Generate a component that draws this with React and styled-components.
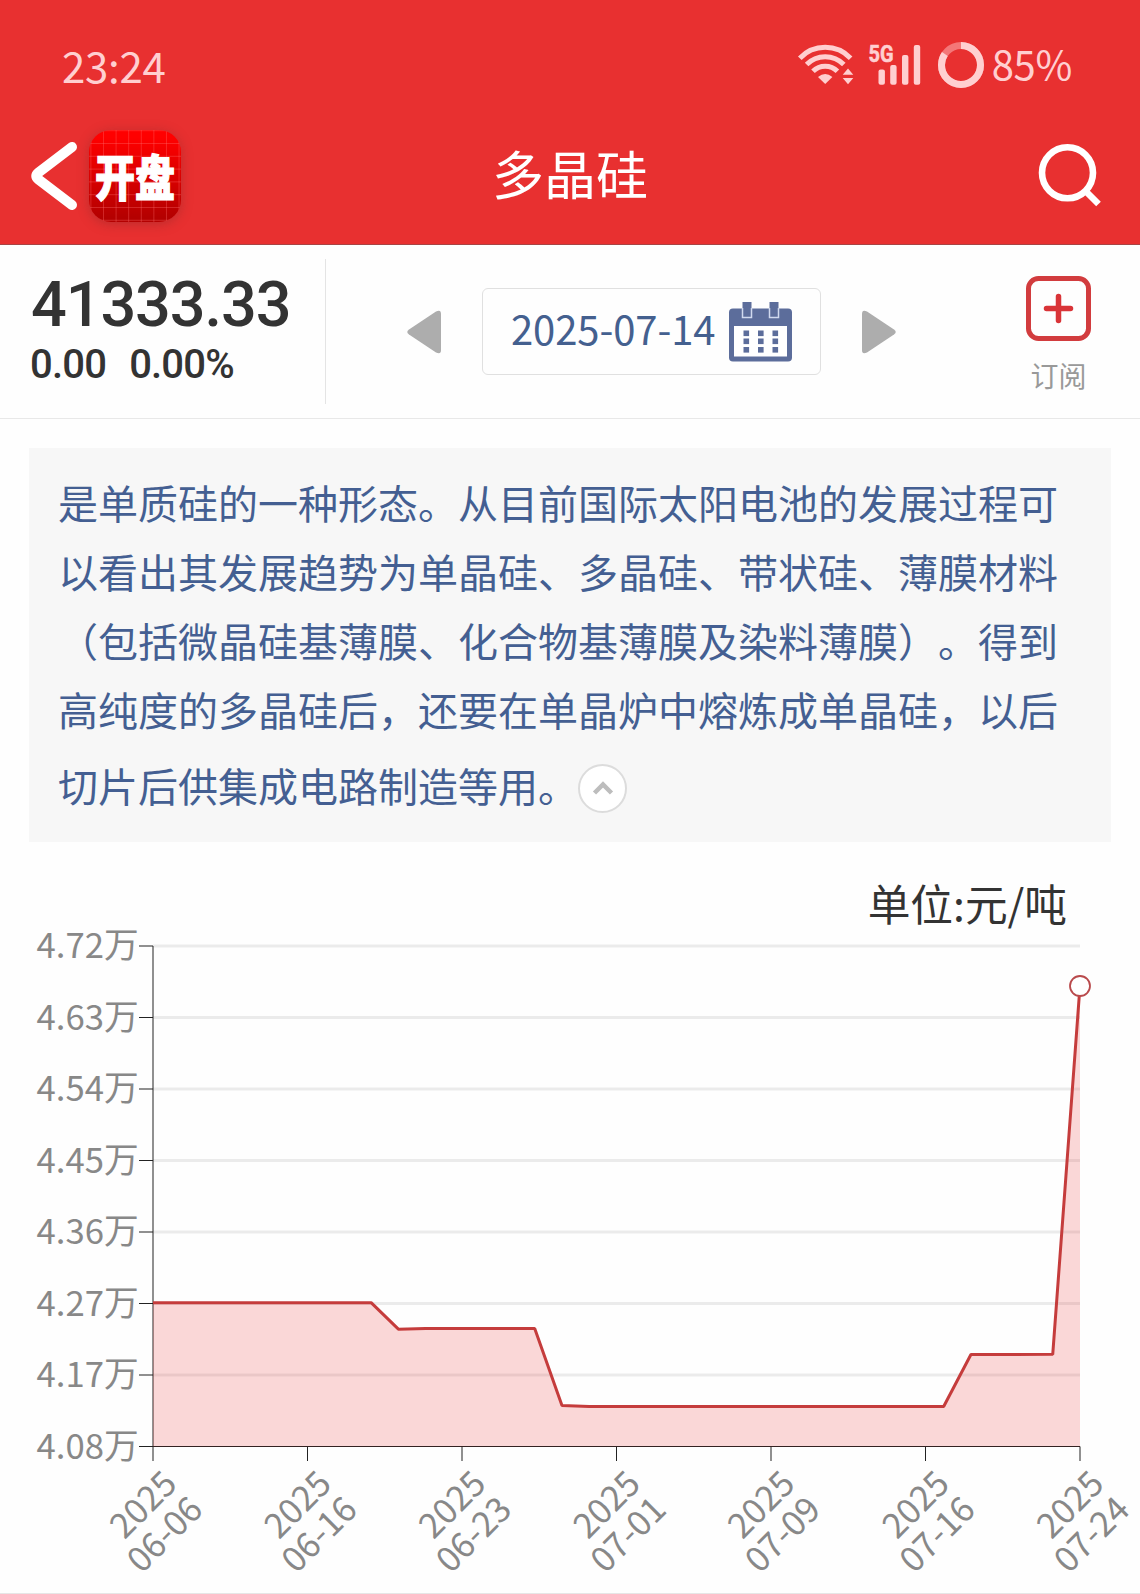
import styled, { createGlobalStyle } from 'styled-components';

const cjk = "'Noto Sans CJK SC', 'Noto Sans', sans-serif";

// 全局样式
const GlobalStyle = createGlobalStyle`
  * {
    box-sizing: border-box;
  }
  body {
    margin: 0;
    background: #fefefe;
    font-family: ${cjk};
  }
  svg {
    display: block;
    flex: none;
    overflow: visible;
  }
`;

const Page = styled.div`
  width: 1140px;
  height: 1594px;
  overflow: hidden;
  display: flex;
  flex-direction: column;
  border-bottom: 1px solid #e6e6e6;
`;

// 顶部红色区域
const Header = styled.header`
  height: 245px;
  background: #e83030;
  border-bottom: 1px solid #a84444;
`;

const StatusBar = styled.div`
  height: 130px;
  padding: 0 68px 0 62px;
  display: flex;
  align-items: center;
  justify-content: space-between;
  color: #ffcfd0;
`;

const StatusText = styled.span`
  font-size: ${(props) => props.size}px;
  line-height: 44px;
  letter-spacing: -0.3px;
  padding-bottom: ${(props) => props.lift}px;
`;

const StatusIcons = styled.div`
  display: flex;
  align-items: center;
`;

const Gap = styled.i`
  width: ${(props) => props.w}px;
`;

const NavBar = styled.div`
  height: 115px;
  padding: 0 38px 23px 30px;
  display: grid;
  grid-template-columns: 1fr auto 1fr;
  align-items: center;
`;

const NavSide = styled.div`
  display: flex;
  align-items: center;
  gap: 11px;
  justify-content: ${(props) => (props.end ? 'flex-end' : 'flex-start')};
`;

const Title = styled.h1`
  margin: 0;
  padding: 0 0 6px 8px;
  color: #fff;
  font-size: 52px;
  font-weight: 400;
  line-height: 86px;
`;

const Logo = styled.div`
  width: 92px;
  height: 92px;
  padding-bottom: 3px;
  border-radius: 22px;
  display: flex;
  align-items: center;
  justify-content: center;
  background:
    linear-gradient(90deg, rgba(255, 110, 110, 0.35) 1px, transparent 1px) 14px 0 / 12.6px 100%,
    linear-gradient(rgba(255, 110, 110, 0.35) 1px, transparent 1px) 0 13px / 100% 12.8px,
    linear-gradient(#ff0000 8%, #b40000 95%);
  box-shadow: 0 2px 12px rgba(120, 40, 40, 0.4);
`;

const LogoText = styled.span`
  color: #fff;
  font-size: 40px;
  font-weight: 900;
  line-height: 40px;
  -webkit-text-stroke: 1px #fff;
  transform: scaleY(1.23);
`;

// 行情栏
const QuoteBar = styled.section`
  height: 174px;
  display: flex;
  align-items: center;
  border-bottom: 1px solid #e8e8e8;
`;

const Quote = styled.div`
  width: 326px;
  height: 145px;
  padding: 14px 0 0 30px;
  border-right: 1px solid #e4e4e4;
  color: #333;
  font-family: Roboto, sans-serif;
  font-weight: 500;
`;

const Price = styled.div`
  padding-left: 1px;
  font-size: 63px;
  line-height: 64px;
  letter-spacing: -1.1px;
  white-space: nowrap;
`;

const Change = styled.div`
  display: flex;
  gap: 23px;
  font-size: 40px;
  line-height: 48px;
  letter-spacing: -0.8px;
  margin-top: 4px;
`;

const DatePicker = styled.div`
  flex: 1;
  display: flex;
  align-items: center;
  justify-content: center;
  gap: 41px;
`;

const DateBox = styled.div`
  width: 339px;
  height: 87px;
  padding: 0 28px;
  display: flex;
  align-items: center;
  justify-content: space-between;
  border: 1px solid #e0e0e0;
  border-radius: 6px;
  color: #44608f;
  font-size: 40px;
  line-height: 50px;
`;

const DateText = styled.span`
  padding-bottom: 7px;
  letter-spacing: -0.1px;
`;

const Subscribe = styled.div`
  width: 163px;
  padding-top: 9px;
  display: flex;
  flex-direction: column;
  align-items: center;
  gap: 13px;
  color: #999;
  font-size: 28px;
  line-height: 42px;
`;

// 简介
const Intro = styled.p`
  width: 1082px;
  height: 394px;
  margin: 29px 0 0 29px;
  padding: 20px 51px 0 29px;
  background: #f7f7f7;
  color: #445f92;
  font-size: 40px;
  line-height: 69px;
  text-spacing-trim: space-all;
`;

const LastLine = styled.span`
  display: flex;
  align-items: center;
  height: 83px;
`;

const FoldButton = styled.button`
  width: 49px;
  height: 49px;
  margin-top: 5px;
  padding: 0;
  display: flex;
  align-items: center;
  justify-content: center;
  border: 2px solid #dcdcdc;
  border-radius: 50%;
  background: #fff;
`;

const Unit = styled.div`
  padding: 30px 73px 1px 0;
  color: #333;
  font-size: 42.7px;
  line-height: 60px;
  text-align: right;
`;

const ChartSvg = styled.svg`
  margin-top: 2px;
  text {
    font-family: ${cjk};
    font-size: 34.7px;
    fill: #888;
    text-anchor: end;
  }
`;

const WifiIcon = () => (
  <svg width='56' height='42' viewBox='798 44 56 42'>
    <g fill='none' stroke='#ffcfd0' strokeWidth='5'>
      <path d='M799.8 58.2A35 35 0 0 1 850.6 58.2' />
      <path d='M806.6 64.5A26 26 0 0 1 843.8 64.5' />
      <path d='M813 71.3A17 17 0 0 1 837.4 71.3' />
    </g>
    <path d='M818 77Q825.2 71 832.4 77L825.2 84Z' fill='#ffcfd0' />
    <path d='M848 68.5L853.3 74.8H842.7ZM848 84.2L853.3 78H842.7Z' fill='#ffcfd0' />
  </svg>
);

const SignalIcon = () => (
  <svg width='53' height='42' viewBox='868 44 53 42' fill='#ffcfd0'>
    <text
      x='868.5'
      y='61.7'
      fontFamily='Roboto'
      fontWeight='700'
      fontSize='24'
      stroke='#ffcfd0'
      strokeWidth='0.6'
      textLength='25'
      lengthAdjust='spacingAndGlyphs'
    >
      5G
    </text>
    <rect x='878.5' y='69.5' width='6.4' height='15.3' rx='2' />
    <rect x='890.2' y='65' width='6.4' height='19.8' rx='2' />
    <rect x='902' y='55' width='6.4' height='29.8' rx='2' />
    <rect x='913.8' y='45' width='6.4' height='39.8' rx='2' />
  </svg>
);

const BatteryRing = () => (
  <svg width='48' height='48' viewBox='0 0 48 48' fill='none' strokeWidth='7'>
    <circle cx='24' cy='24' r='19.5' stroke='#f47778' />
    <circle cx='24' cy='24' r='19.5' stroke='#ffcfd0' pathLength='100' strokeDasharray='84.5 15.5' transform='rotate(-90 24 24)' />
  </svg>
);

const BackIcon = () => (
  <svg width='48' height='70' viewBox='0 0 48 70' fill='none' stroke='#fff' strokeWidth='10' strokeLinecap='round' strokeLinejoin='round'>
    <path d='M42 6L8.5 31.5Q4 35 8.5 38.5L42 64' />
  </svg>
);

const SearchIcon = () => (
  <svg width='64' height='64' viewBox='0 0 64 64' fill='none' stroke='#fff' strokeWidth='6.6'>
    <circle cx='29.5' cy='28.8' r='25.5' />
    <path d='M47 46.5L60.5 60' />
  </svg>
);

const Arrow = ({ next }) => (
  <svg width='34' height='44' viewBox='0 0 34 44' fill='#adadad'>
    <path
      d='M34 4V40Q34 45 29 42.5L2 24.5Q-1.5 22 2 19.5L29 1.5Q34 -1 34 4Z'
      transform={next ? 'matrix(-1 0 0 1 34 0)' : undefined}
    />
  </svg>
);

const CalendarIcon = () => (
  <svg width='63' height='60' viewBox='0 0 63 60'>
    <rect y='6.5' width='63' height='53' rx='4' fill='#5c6d9b' />
    <rect x='5' y='24' width='53' height='30.5' fill='#fff' />
    {[13.5, 40.5].map((x) => (
      <path key={x} d={`M${x} 0V15.5H${x + 9}V0Z`} fill='#5c6d9b' />
    ))}
    {[13.5, 40.5].map((x) => (
      <path key={x} d={`M${x} 6V15.5H${x + 9}V6`} fill='none' stroke='#d0d9ee' strokeWidth='1.5' />
    ))}
    {[14.5, 29, 43.5].map((x) => [28.5, 36.5, 45].map((y) => (
      <rect key={`${x}-${y}`} x={x} y={y} width='5.6' height='5.6' fill='#5c6d9b' />
    )))}
  </svg>
);

const PlusIcon = () => (
  <svg width='65' height='65' viewBox='0 0 65 65' fill='none' strokeWidth='5'>
    <rect x='2.5' y='2.5' width='60' height='60' rx='10' stroke='#d23c3e' />
    <path d='M32.5 20.5V44.5M20.5 32.5H44.5' stroke='#d93438' strokeWidth='5.5' strokeLinecap='round' />
  </svg>
);

// 图表坐标
const LEFT = 153;
const RIGHT = 1080;
const TOP = 11;
const STEP = 71.5;
const BOTTOM = TOP + STEP * 7;

const yLabels = ['4.72万', '4.63万', '4.54万', '4.45万', '4.36万', '4.27万', '4.17万', '4.08万'];
const xLabels = ['06-06', '06-16', '06-23', '07-01', '07-09', '07-16', '07-24'];

// [第几个交易日, 距离底部的高度]
const points = [
  [0, 143.8], [8, 143.8], [9, 117.3], [10, 117.9], [14, 117.9], [15, 41.1],
  [16, 40], [29, 40], [30, 92], [33, 92.2], [34, 460.5],
].map(([i, h]) => [LEFT + ((RIGHT - LEFT) / 34) * i, BOTTOM - h]);

const Chart = () => {
  const line = points.map((p) => p.join(',')).join(' ');
  const [endX, endY] = points[points.length - 1];
  return (
    <ChartSvg width='1140' height='650' viewBox='0 0 1140 650'>
      {yLabels.slice(0, 7).map((label, i) => (
        <path key={label} d={`M${LEFT} ${TOP + STEP * i}H${RIGHT}`} stroke='#ebebeb' strokeWidth='2.8' />
      ))}
      <g stroke='#222' strokeWidth='1'>
        <path d={`M${LEFT} ${TOP}V${BOTTOM}H${RIGHT}`} fill='none' />
        {yLabels.map((label, i) => (
          <path key={label} d={`M139 ${TOP + STEP * i}H${LEFT}`} />
        ))}
        {xLabels.map((label, i) => (
          <path key={label} d={`M${LEFT + 154.5 * i} ${BOTTOM}v14.5`} />
        ))}
      </g>
      <polygon points={`${LEFT},${BOTTOM} ${line} ${RIGHT},${BOTTOM}`} fill='#e83030' fillOpacity='0.19' />
      <polyline points={line} fill='none' stroke='#c53c3c' strokeWidth='3' strokeLinejoin='bevel' />
      <circle cx={endX} cy={endY} r='10' fill='#fff' stroke='#b94a4c' strokeWidth='1.8' />
      {yLabels.map((label, i) => (
        <text key={label} x='138.7' y={TOP + STEP * i + 12}>{label}</text>
      ))}
      {xLabels.map((label, i) => (
        <g key={label} transform={`translate(${LEFT + 154.5 * i} ${BOTTOM}) rotate(-45)`}>
          <text x='-9.5' y='46.2'>2025</text>
          <text x='-9.5' y='82.5'>{label}</text>
        </g>
      ))}
    </ChartSvg>
  );
};

export default function App() {
  return (
    <Page>
      <GlobalStyle />
      <Header>
        <StatusBar>
          <StatusText size={42} lift={1}>23:24</StatusText>
          <StatusIcons>
            <WifiIcon />
            <Gap w={14} />
            <SignalIcon />
            <Gap w={16.5} />
            <BatteryRing />
            <Gap w={6.5} />
            <StatusText size={40} lift={4}>85%</StatusText>
          </StatusIcons>
        </StatusBar>
        <NavBar>
          <NavSide>
            <BackIcon />
            <Logo>
              <LogoText>开盘</LogoText>
            </Logo>
          </NavSide>
          <Title>多晶硅</Title>
          <NavSide end>
            <SearchIcon />
          </NavSide>
        </NavBar>
      </Header>
      <QuoteBar>
        <Quote>
          <Price>41333.33</Price>
          <Change>
            <span>0.00</span>
            <span>0.00%</span>
          </Change>
        </Quote>
        <DatePicker>
          <Arrow />
          <DateBox>
            <DateText>2025-07-14</DateText>
            <CalendarIcon />
          </DateBox>
          <Arrow next />
        </DatePicker>
        <Subscribe>
          <PlusIcon />
          订阅
        </Subscribe>
      </QuoteBar>
      <Intro>
        是单质硅的一种形态。从目前国际太阳电池的发展过程可以看出其发展趋势为单晶硅、多晶硅、带状硅、薄膜材料（包括微晶硅基薄膜、化合物基薄膜及染料薄膜）。得到高纯度的多晶硅后，还要在单晶炉中熔炼成单晶硅，以后
        <LastLine>
          切片后供集成电路制造等用。
          <FoldButton>
            <svg width='20' height='14' viewBox='0 0 20 14' fill='none' stroke='#bdbdbd' strokeWidth='4.5'>
              <path d='M1.5 12L10 3.5L18.5 12' />
            </svg>
          </FoldButton>
        </LastLine>
      </Intro>
      <Unit>单位:元/吨</Unit>
      <Chart />
    </Page>
  );
}
